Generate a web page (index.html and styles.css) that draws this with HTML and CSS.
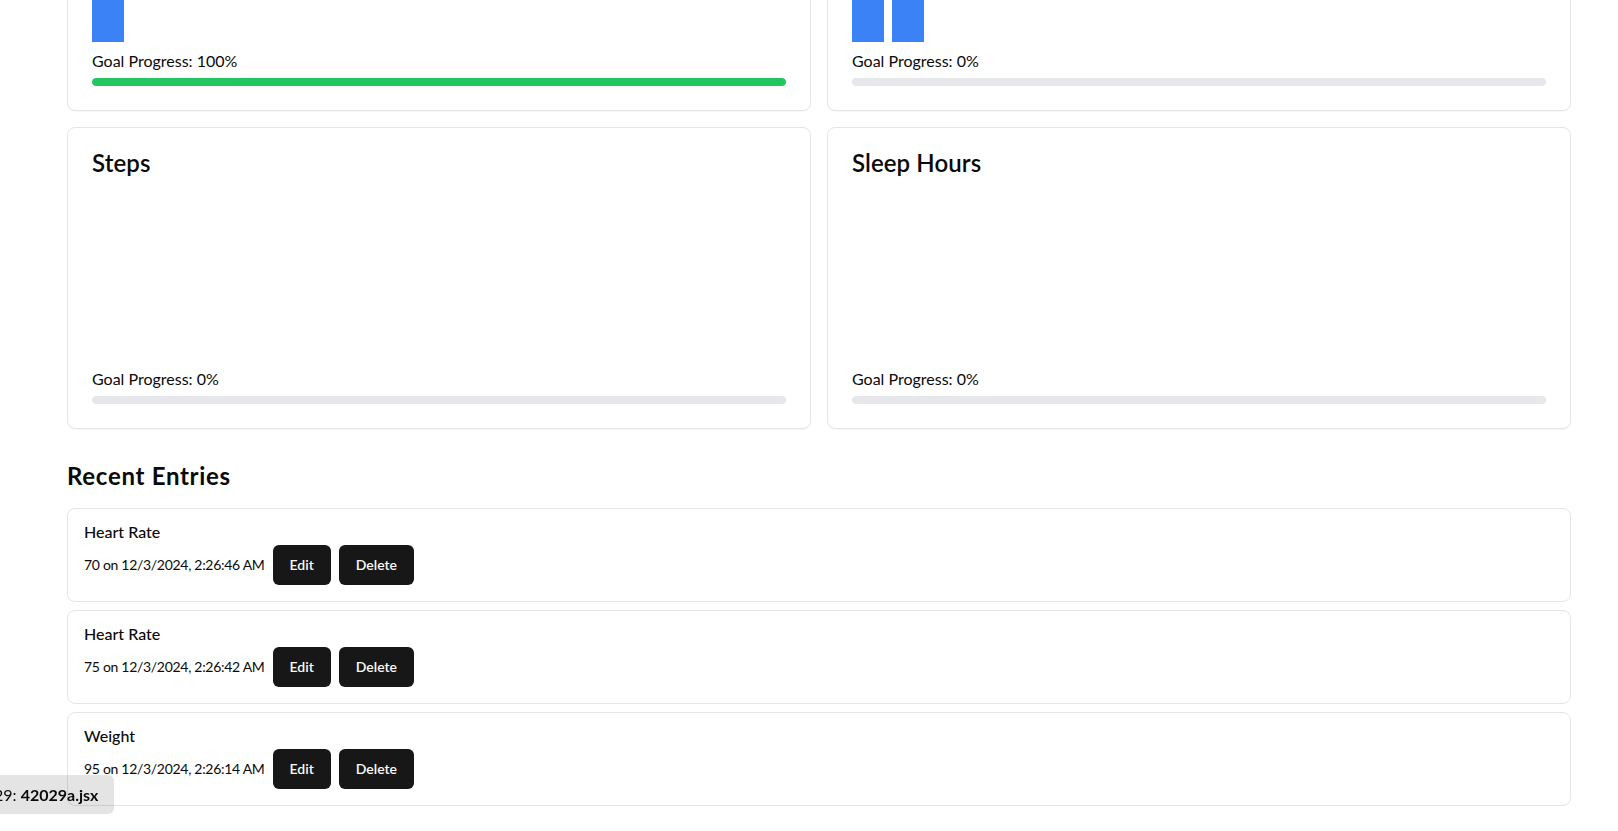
FILE: index.html
```html
<!DOCTYPE html>
<html lang="en">
<head>
<meta charset="utf-8">
<title>Health Tracker</title>
<link rel="stylesheet" href="styles.css">
</head>
<body>
<main class="page">
  <section class="charts">
    <div class="card">
      <h3 class="card-title">Weight</h3>
      <div class="chart">
        <div class="bar" style="height: 95px"></div>
      </div>
      <p class="goal">Goal Progress: 100%</p>
      <div class="track"><div class="fill" style="width: 100%"></div></div>
    </div>
    <div class="card">
      <h3 class="card-title">Heart Rate</h3>
      <div class="chart">
        <div class="bar" style="height: 75px"></div>
        <div class="bar" style="height: 70px"></div>
      </div>
      <p class="goal">Goal Progress: 0%</p>
      <div class="track"><div class="fill" style="width: 0%"></div></div>
    </div>
    <div class="card">
      <h3 class="card-title">Steps</h3>
      <div class="chart"></div>
      <p class="goal">Goal Progress: 0%</p>
      <div class="track"><div class="fill" style="width: 0%"></div></div>
    </div>
    <div class="card">
      <h3 class="card-title">Sleep Hours</h3>
      <div class="chart"></div>
      <p class="goal">Goal Progress: 0%</p>
      <div class="track"><div class="fill" style="width: 0%"></div></div>
    </div>
  </section>

  <h2 class="section-title">Recent Entries</h2>
  <ul class="entries">
    <li class="entry">
      <p class="entry-title">Heart Rate</p>
      <div class="entry-row">
        <span class="entry-meta">70 on 12/3/2024, 2:26:46 AM</span>
        <button class="btn">Edit</button>
        <button class="btn">Delete</button>
      </div>
    </li>
    <li class="entry">
      <p class="entry-title">Heart Rate</p>
      <div class="entry-row">
        <span class="entry-meta">75 on 12/3/2024, 2:26:42 AM</span>
        <button class="btn">Edit</button>
        <button class="btn">Delete</button>
      </div>
    </li>
    <li class="entry">
      <p class="entry-title">Weight</p>
      <div class="entry-row">
        <span class="entry-meta">95 on 12/3/2024, 2:26:14 AM</span>
        <button class="btn">Edit</button>
        <button class="btn">Delete</button>
      </div>
    </li>
  </ul>
</main>
<div class="file-badge">29: <b>42029a.jsx</b></div>
</body>
</html>
```
FILE: styles.css
```css
* { box-sizing: border-box; }

html, body {
  margin: 0;
  padding: 0;
  background: #ffffff;
  overflow: hidden;
}

body {
  font-family: Lato, "Noto Sans", sans-serif;
  color: #0a0a0a;
}

.page {
  width: 1504px;
  margin: -191px 0 0 67px;
}

.charts {
  display: grid;
  grid-template-columns: 1fr 1fr;
  gap: 16px;
}

.card {
  background: #fff;
  border: 1px solid #e5e5e5;
  border-radius: 8px;
  padding: 24px;
  box-shadow: 0 1px 1px rgba(0, 0, 0, 0.03);
}

.card-title {
  margin: 0 0 26px;
  font-size: 24px;
  line-height: 22px;
  font-weight: 600;
  letter-spacing: 0.1px;
}

.chart {
  height: 160px;
  display: flex;
  align-items: flex-end;
  gap: 8px;
}

.bar {
  width: 32px;
  background: #3b82f6;
}

.goal {
  margin: 8px 0 0;
  font-size: 16px;
  line-height: 20px;
  position: relative;
  top: 0.5px;
}

.track {
  margin-top: 8px;
  height: 8px;
  border-radius: 9999px;
  background: #e5e7eb;
  overflow: hidden;
}

.fill {
  height: 100%;
  background: #22c55e;
  border-radius: 9999px;
}

.section-title {
  margin: 31px 0 16px;
  font-size: 24px;
  line-height: 32px;
  font-weight: 700;
  letter-spacing: 0.7px;
}

.entries {
  list-style: none;
  margin: 0;
  padding: 0;
  display: flex;
  flex-direction: column;
  gap: 8px;
}

.entry {
  border: 1px solid #e5e5e5;
  border-radius: 8px;
  padding: 16px;
  background: #fff;
}

.entry-title {
  margin: 0 0 6px;
  font-size: 16px;
  line-height: 14px;
  font-weight: 500;
}

.entry-row {
  display: flex;
  align-items: center;
  gap: 8px;
}

.entry-meta {
  font-size: 14px;
  line-height: 20px;
  letter-spacing: -0.3px;
}

.btn {
  height: 40px;
  padding: 0 17px;
  border: 0;
  border-radius: 6px;
  background: #171717;
  color: #fafafa;
  font-family: inherit;
  font-size: 14px;
  font-weight: 600;
  line-height: 20px;
}

.file-badge {
  position: fixed;
  left: -6px;
  bottom: 17px;
  height: 39px;
  line-height: 39px;
  padding: 0 16px 0 0;
  border-radius: 6px;
  background: rgba(0, 0, 0, 0.105);
  font-size: 16px;
  color: #0a0a0a;
  white-space: nowrap;
}

.file-badge b {
  font-weight: 700;
}
```
